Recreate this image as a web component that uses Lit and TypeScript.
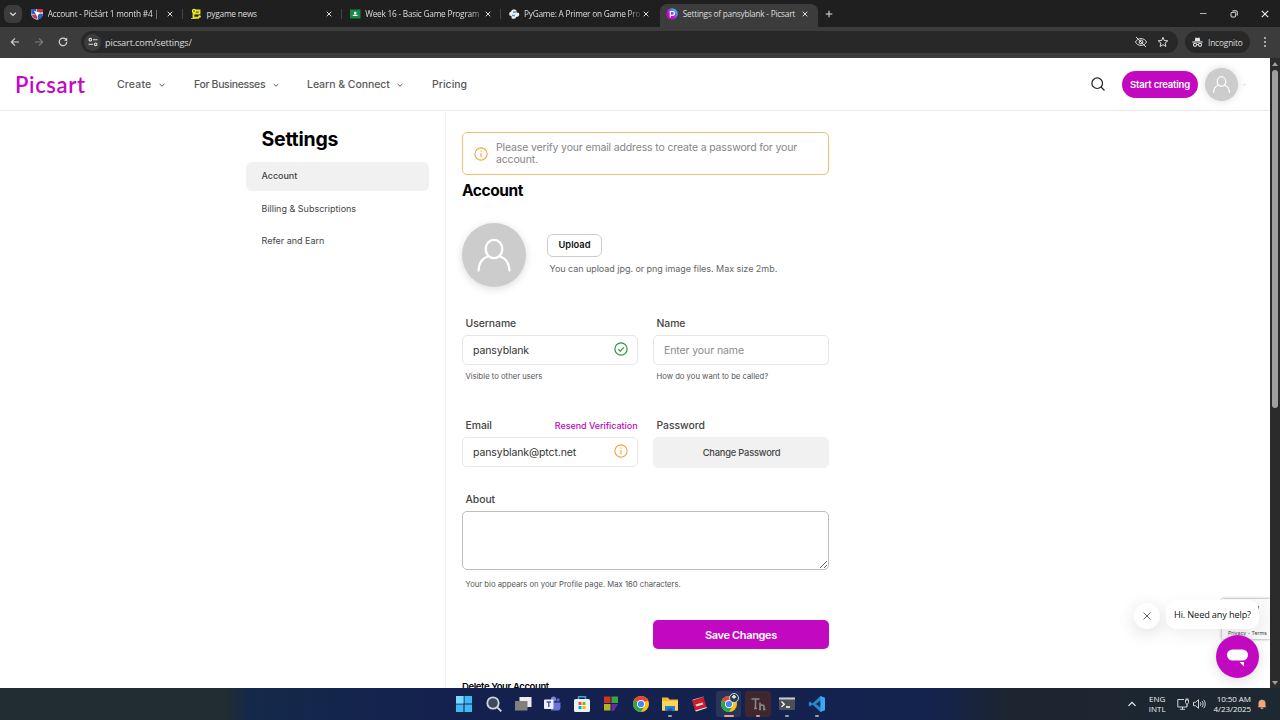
import { html, svg, css, LitElement } from 'lit';
import { customElement, property } from 'lit/decorators.js';

const icons: Record<string, unknown> = {
  shield: svg`<svg viewBox="0 0 12 12"><path d="M0 1h12v4c0 4-3 6-6 7C3 11 0 9 0 5z" fill="#b9c8de"/><path d="M0 1h5v5H.5zM7 6h5c-.6 3-3 5-5 5.600z" fill="#2b5fc0"/><path d="M6 1h6v3L6 5zM1 7l5-1v5C3 10 1.500 9 1 7z" fill="#c63545"/><path d="M3 3l6 1.500-3 4z" fill="#fff"/></svg>`,
  snake: svg`<svg viewBox="0 0 12 12"><path d="M4 2.500h5.500v3H3.500v4.200H9" fill="none" stroke="#e6e21c" stroke-width="1.900"/><circle cx="4" cy="3" r="2.200" fill="#f2ee2a"/><circle cx="9.500" cy="8.500" r="1.300" fill="#f2ee2a"/><circle cx="4" cy="3" r=".8" fill="#222"/><path d="M6.500 3h2M1 10.500h4" stroke="#d8d8b0" stroke-width=".8"/></svg>`,
  classroom: svg`<svg viewBox="0 0 12 12"><path d="M1 1.500h10.500v9H1z" fill="#188a42"/><circle cx="6.200" cy="5" r="1.300" fill="#fff"/><path d="M3.500 8c.4-2 5-2 5.400 0z" fill="#fff"/></svg>`,
  python: svg`<svg viewBox="0 0 12 12"><path d="M3.500 2.500C4 1 8 1 8.500 2.500V4.500L11 5c.5 2 0 3.500-1.500 3.800L8 9c0 2-3.500 2.500-4.500 1V8L1.500 7.500C.8 5 1.500 4 3 3.800z" fill="#e9f2fb"/><path d="M5 4h3M4 7.500h3" stroke="#5c8fc6" stroke-width="1.300"/></svg>`,
  picsart: svg`<svg viewBox="0 0 12 12"><defs><linearGradient id="pg" x1="0" y1="1" x2="1" y2="0"><stop offset=".35" stop-color="#c209c1"/><stop offset=".6" stop-color="#7a5be8"/><stop offset=".85" stop-color="#22d0f0"/></linearGradient></defs><circle cx="6" cy="6" r="5.800" fill="url(#pg)"/><path d="M4.300 9.500V3.500h2.200a1.800 1.800 0 0 1 0 3.800H4.300" fill="none" stroke="#fff" stroke-width="1.200"/></svg>`,
  close: svg`<svg viewBox="0 0 12 12"><path d="M3.700 3.700l4.600 4.600M8.300 3.700l-4.600 4.600" stroke="#dcdcdc" stroke-width="1"/></svg>`,
  plus: svg`<svg viewBox="0 0 12 12"><path d="M6 2.700v6.600M2.700 6h6.600" stroke="#e3e3e3" stroke-width="1"/></svg>`,
  chevron: svg`<svg viewBox="0 0 12 12"><path d="M3.200 4.800L6 7.500l2.800-2.700" fill="none" stroke="currentColor" stroke-width="1.200"/></svg>`,
  back: svg`<svg viewBox="0 0 12 12"><path d="M10 6H2.500M6 2.300L2.300 6 6 9.700" fill="none" stroke="#d6d6d6" stroke-width="1.100"/></svg>`,
  forward: svg`<svg viewBox="0 0 12 12"><path d="M2 6h7.500M6 2.300L9.700 6 6 9.700" fill="none" stroke="#7d7d7d" stroke-width="1.100"/></svg>`,
  reload: svg`<svg viewBox="0 0 12 12"><path d="M9.800 5.800a3.800 3.800 0 1 1-1.100-2.600L9.800 4.300" fill="none" stroke="#d6d6d6" stroke-width="1.200"/><path d="M10.200 1.500v3.200H7z" fill="#d6d6d6"/></svg>`,
  tune: svg`<svg viewBox="0 0 12 12"><g fill="none" stroke="#dcdcdc" stroke-width="1.100"><circle cx="3.300" cy="3.700" r="1.300"/><path d="M6 3.700h4.500M1.500 8.300H6"/><circle cx="8.700" cy="8.300" r="1.300"/></g></svg>`,
  eyeOff: svg`<svg viewBox="0 0 14 14"><g fill="none" stroke="#dcdcdc" stroke-width="1"><path d="M1.500 7C3.500 2.500 10.500 2.500 12.500 7 10.500 11.500 3.500 11.500 1.500 7z"/><circle cx="7" cy="7" r="1.900"/><path d="M2 2l10 10"/></g></svg>`,
  star: svg`<svg viewBox="0 0 14 14"><path d="M7 2.300l1.300 3.200 3.500.3-2.700 2.300.8 3.400L7 9.700l-2.900 1.800.8-3.400-2.700-2.300 3.500-.3z" fill="none" stroke="#dcdcdc" stroke-width="1"/></svg>`,
  incognito: svg`<svg viewBox="0 0 14 14"><path d="M4 6l.8-3.800 2.200.5 2.200-.5L10 6z" fill="#e3e3e3"/><path d="M1.500 7h11" stroke="#e3e3e3" stroke-width="1.200"/><g fill="none" stroke="#e3e3e3" stroke-width="1.100"><circle cx="4.300" cy="10" r="1.700"/><circle cx="9.700" cy="10" r="1.700"/><path d="M6 9.800h2"/></g></svg>`,
  dots: svg`<svg viewBox="0 0 12 12"><g fill="#dcdcdc"><circle cx="6" cy="2" r=".9"/><circle cx="6" cy="6" r=".9"/><circle cx="6" cy="10" r=".9"/></g></svg>`,
  minimize: svg`<svg viewBox="0 0 12 12"><path d="M3 5.500h6.500" stroke="#b6b6b6"/></svg>`,
  restore: svg`<svg viewBox="0 0 12 12"><g fill="none" stroke="#e3e3e3"><rect x="3" y="4.300" width="4.700" height="4.700" rx="1"/><path d="M4.500 2.800h3.500a1.300 1.300 0 0 1 1.300 1.300v3.400"/></g></svg>`,
  winClose: svg`<svg viewBox="0 0 12 12"><path d="M2.800 2.800l6.400 6.400M9.200 2.800L2.800 9.200" stroke="#efefef" stroke-width="1.100"/></svg>`,
  search: svg`<svg viewBox="0 0 16 16"><circle cx="7.200" cy="7.200" r="5.300" fill="none" stroke="#222" stroke-width="1.200"/><path d="M11 11l3.500 3.500" stroke="#222" stroke-width="1.200"/></svg>`,
  person: svg`<svg viewBox="0 0 64 64"><g fill="none" stroke="#fff" stroke-width="2.300" stroke-linecap="round"><ellipse cx="32" cy="26" rx="8.300" ry="9.200"/><path d="M16.500 47.500c.5-7 4-12.500 9.500-14M47.500 47.500c-.5-7-4-12.500-9.500-14"/></g></svg>`,
  info: svg`<svg viewBox="0 0 14 14"><g fill="none" stroke="#f4a53c" stroke-width="1.100"><circle cx="7" cy="7" r="6.100"/><path d="M7 6v4.300M7 3.600v1.200"/></g></svg>`,
  check: svg`<svg viewBox="0 0 14 14"><g fill="none" stroke="#2f9440" stroke-width="1.200"><circle cx="7" cy="7" r="6.100"/><path d="M4.300 7.200l2 1.900 3.600-3.800"/></g></svg>`,
  dismiss: svg`<svg viewBox="0 0 12 12"><path d="M2.500 2.500l7 7M9.500 2.500l-7 7" stroke="#666" stroke-width="1"/></svg>`,
  chat: svg`<svg viewBox="0 0 43 43"><rect x="11" y="14.500" width="21" height="11" rx="5.500" fill="#fff"/><path d="M23.500 27h4.500v4.500z" fill="#fff"/></svg>`,
  windows: svg`<svg viewBox="0 0 18 18"><path d="M1 1h7.500v7.500H1zM9.500 1H17v7.500H9.500zM1 9.500h7.500V17H1zM9.500 9.500H17V17H9.500z" fill="#3fb9f7"/><path d="M1 1h7.500v7.500H1z" fill="#7ad8ff"/></svg>`,
  find: svg`<svg viewBox="0 0 18 18"><circle cx="8" cy="8" r="5.700" fill="#3c485c" stroke="#d0d5df" stroke-width="1.800"/><path d="M12.300 12.300l4 4" stroke="#d0d5df" stroke-width="1.900"/></svg>`,
  tasks: svg`<svg viewBox="0 0 18 18"><path d="M5.500 2H17.500v10H5.500z" fill="#ededec"/><path d="M1 6h12.500v9.500H1z" fill="#80817e"/></svg>`,
  teams: svg`<svg viewBox="0 0 18 18"><circle cx="10.500" cy="4" r="2.600" fill="#7b83eb"/><circle cx="15" cy="5" r="1.800" fill="#5b62c5"/><path d="M8 7.500h9.500V12a3 3 0 0 1-3.500 3.500H8z" fill="#6b72dc"/><rect x="1" y="4.500" width="9.500" height="9.500" rx="1" fill="#eef0fb"/><path d="M3.500 7h4.500M5.800 7v5" stroke="#4a51b8" stroke-width="1.400"/></svg>`,
  store: svg`<svg viewBox="0 0 18 18"><path d="M5.500 5V1.700h7V5" fill="none" stroke="#35a7e6" stroke-width="1.400"/><rect x="1" y="4" width="16" height="13" rx="1.500" fill="#eef2f5"/><path d="M5.500 7h3v3h-3z" fill="#f25022"/><path d="M9.500 7h3v3h-3z" fill="#7fba00"/><path d="M5.500 11h3v3h-3z" fill="#00a4ef"/><path d="M9.500 11h3v3h-3z" fill="#ffb900"/></svg>`,
  blocks: svg`<svg viewBox="0 0 18 18"><path d="M2 1.500h6.500V8H2z" fill="#d03224"/><path d="M9.500 1.500H16V8H9.500z" fill="#37a53a"/><path d="M2 9h6.500v6.500H2z" fill="#b2b51c"/><path d="M9.500 9H16l-4 7H9.500z" fill="#6a29a8"/></svg>`,
  chrome: svg`<svg viewBox="0 0 18 18"><circle cx="9" cy="9" r="8" fill="#fbc116"/><path d="M9 9L2.100 5A8 8 0 0 1 15.900 5z" fill="#ea4335"/><path d="M2.100 5A8 8 0 0 0 9 17l3.500-6z" fill="#2fa34f"/><path d="M9 5h6.900" stroke="#ea4335"/><circle cx="9" cy="9" r="4" fill="#fff"/><circle cx="9" cy="9" r="3.100" fill="#4285f4"/></svg>`,
  folder: svg`<svg viewBox="0 0 18 18"><path d="M1 2.500h6l1.500 2H17v11H1z" fill="#f5b92e"/><path d="M1 6h16v9.500H1z" fill="#fcd55b"/><path d="M4 11h10v5H4z" fill="#2b7fd0"/><path d="M6.500 13.500h5V16h-5z" fill="#1b5fa8"/></svg>`,
  redCard: svg`<svg viewBox="0 0 18 18"><path d="M2 5.500L13.500 2l3 10L5 15.500z" fill="#c81e2c"/><path d="M2 5.500l1-1L14 1.600l-.5.400z" fill="#f4d8da"/><path d="M5.500 9.500l7-2 .8 2-7 2z" fill="#f1cfd2"/><path d="M5 15.500l11.500-3.500.3 1L6 16.500z" fill="#f4e5e5"/></svg>`,
  serif: svg`<svg viewBox="0 0 18 18"><g fill="none" stroke="#8b8984" stroke-width="1.600"><path d="M2.500 4h8M6.500 4v9.500M5 13.500h3"/><path d="M11 7.500v7M11 11.500c0-2 4-2 4 0v3M10 14.500h2M14 14.500h2.500"/></g></svg>`,
  terminal: svg`<svg viewBox="0 0 18 18"><rect x="1" y="2.500" width="16" height="12.500" rx="1" fill="#4c5157"/><path d="M1 2.500h16v2H1z" fill="#c8cbd0"/><path d="M3.500 6.500l2.800 2.700-2.800 2.700M8 12h4" fill="none" stroke="#fff" stroke-width="1.300"/></svg>`,
  code: svg`<svg viewBox="0 0 18 18"><path d="M12.500 1L17 3v12l-4.500 2-8-7.500L2 11.500.8 10.500V7.500L2 6.500l2.500 2z" fill="#1f8ad2"/><path d="M12.500 5.500V12.500L8 9z" fill="#14264d"/><path d="M12.500 1L17 3v12l-4.500 2z" fill="#3aa8f2"/></svg>`,
  up: svg`<svg viewBox="0 0 12 12"><path d="M2.500 7.800L6 4.300l3.500 3.500" fill="none" stroke="#f1f1f1" stroke-width="1.200"/></svg>`,
  network: svg`<svg viewBox="0 0 14 14"><g fill="none" stroke="#e3e6e9" stroke-width=".9"><path d="M8 2.500H1.800V10H11V8.500M4 12.300h5M6.500 10v2"/><path d="M9.500 3v2.500c0 2 3 2 3 0V3zM10.200 3V1.300M11.800 3V1.300M11 7v2"/></g></svg>`,
  volume: svg`<svg viewBox="0 0 14 14"><g fill="none" stroke="#e3e6e9" stroke-width=".9"><path d="M1.500 5.300h2L6.500 2.700v8.600L3.500 8.700h-2z"/><path d="M8.300 5.300c.8 1 .8 2.400 0 3.400M10 4c1.500 1.800 1.500 4.200 0 6M11.700 2.800c2 2.500 2 6 0 8.400"/></g></svg>`,
  bell: svg`<svg viewBox="0 0 12 14"><path d="M1.500 10.500C2.500 9.500 2.200 8 2.200 6a3.800 3.800 0 0 1 7.600 0c0 2-.3 3.500.7 4.500zM4.500 11.500h3c-.3 1.500-2.700 1.500-3 0z" fill="#f3a57c" stroke="#f3a57c" stroke-width=".6"/></svg>`,
};

@customElement('ui-icon')
export class UiIcon extends LitElement {
  @property() name = '';

  static styles = css`
    :host {
      display: block;
      flex: none;
      width: 12px;
      height: 12px;
    }

    svg {
      display: block;
      width: 100%;
      height: 100%;
    }
  `;

  render() {
    return html`${icons[this.name]}`;
  }
}

@customElement('browser-chrome')
export class BrowserChrome extends LitElement {
  static styles = css`
    :host {
      display: block;
      height: 58px;
      background: #3c3c3c;
      color: #dedede;
      font-family: 'Open Sans', 'Noto Sans', sans-serif;
    }

    .tabs {
      display: flex;
      align-items: center;
      height: 27px;
      background: #1f1f1f;
    }

    .tab-search {
      display: grid;
      place-items: center;
      width: 18px;
      height: 18px;
      margin: 0 2.500px 0 4px;
      border-radius: 6px;
      background: #3c3c3c;
    }

    .tab {
      position: relative;
      display: flex;
      align-items: center;
      box-sizing: border-box;
      width: 158.750px;
      height: 27px;
      padding: 0 7.250px 0 6.750px;
      font-size: 8.300px;
    }

    .tab:not(.active)::after {
      content: '';
      position: absolute;
      right: 0;
      top: 9px;
      width: 1px;
      height: 10px;
      background: #444;
    }

    .tab:nth-child(5)::after {
      display: none;
    }

    .tab.active {
      height: 23px;
      align-self: flex-end;
      padding-bottom: 4px;
      border-radius: 7px 7px 0 0;
      background: #3c3c3c;
    }

    .tab span {
      flex: 1;
      margin-left: 4.500px;
      white-space: nowrap;
      letter-spacing: -0.240px;
    }

    .tab .cut {
      mask-image: linear-gradient(90deg, #000 90%, #0003 100%);
    }

    .new {
      margin-left: 5px;
    }

    .window {
      display: flex;
      gap: 19px;
      margin: 0 9px 0 auto;
    }

    .toolbar {
      display: flex;
      align-items: center;
      height: 30px;
      padding: 0 9px;
    }

    .toolbar > ui-icon {
      margin-right: 12px;
    }

    .toolbar > ui-icon:last-child {
      margin-right: 0;
    }

    .address {
      display: flex;
      align-items: center;
      box-sizing: border-box;
      width: 1097px;
      height: 22px;
      padding: 0 8px 0 3px;
      border-radius: 11px;
      background: #282828;
      font-size: 9.200px;
      letter-spacing: -0.150px;
    }

    .site {
      display: grid;
      place-items: center;
      width: 17px;
      height: 17px;
      margin-right: 4px;
      border-radius: 50%;
      background: #3c3c3c;
    }

    .address .end {
      display: flex;
      gap: 8px;
      margin-left: auto;
    }

    .end ui-icon,
    .private ui-icon {
      width: 14px;
      height: 14px;
    }

    .private ui-icon {
      width: 13px;
    }

    .private {
      display: flex;
      flex: none;
      align-items: center;
      gap: 4px;
      box-sizing: border-box;
      width: 65px;
      height: 22px;
      margin: 0 9px 0 7px;
      padding-left: 6px;
      border-radius: 11px;
      background: #282828;
      font-size: 8.300px;
      letter-spacing: -0.150px;
    }
  `;

  static tabs = [
    { icon: 'shield', title: 'Account - Pícšárt 1 month #4 |', cut: true },
    { icon: 'snake', title: 'pygame news' },
    { icon: 'classroom', title: 'Week 16 - Basic Game Program', cut: true },
    { icon: 'python', title: 'PyGame: A Primer on Game Pro', cut: true },
    { icon: 'picsart', title: 'Settings of pansyblank - Picsart', active: true },
  ];

  render() {
    return html`
      <div class="tabs">
        <div class="tab-search"><ui-icon name="chevron"></ui-icon></div>
        ${BrowserChrome.tabs.map(
          (t) => html`
            <div class="tab ${t.active ? 'active' : ''}">
              <ui-icon name=${t.icon}></ui-icon>
              <span class=${t.cut ? 'cut' : ''}>${t.title}</span>
              <ui-icon name="close"></ui-icon>
            </div>
          `,
        )}
        <ui-icon class="new" name="plus"></ui-icon>
        <div class="window">
          <ui-icon name="minimize"></ui-icon>
          <ui-icon name="restore"></ui-icon>
          <ui-icon name="winClose"></ui-icon>
        </div>
      </div>
      <div class="toolbar">
        <ui-icon name="back"></ui-icon>
        <ui-icon name="forward"></ui-icon>
        <ui-icon name="reload"></ui-icon>
        <div class="address">
          <div class="site"><ui-icon name="tune"></ui-icon></div>
          <span>picsart.com/settings/</span>
          <div class="end">
            <ui-icon name="eyeOff"></ui-icon>
            <ui-icon name="star"></ui-icon>
          </div>
        </div>
        <div class="private"><ui-icon name="incognito"></ui-icon>Incognito</div>
        <ui-icon name="dots"></ui-icon>
      </div>
    `;
  }
}

@customElement('site-header')
export class SiteHeader extends LitElement {
  static styles = css`
    :host {
      display: flex;
      align-items: center;
      box-sizing: border-box;
      height: 53px;
      padding: 0 23px 0 15px;
      border-bottom: 1px solid #ebebeb;
      color: #5a5a5a;
      font-size: 10.500px;
      font-weight: 500;
    }

    .logo {
      width: 71px;
      margin-right: 31px;
      color: #c209c1;
      font: 600 22px 'Lato', sans-serif;
      letter-spacing: 0.650px;
    }

    nav {
      display: flex;
      flex: 1;
    }

    nav span {
      display: flex;
      align-items: center;
      gap: 5.500px;
    }

    nav ui-icon {
      width: 10px;
      height: 10px;
      margin-top: 2px;
    }

    .create {
      width: 77px;
      letter-spacing: 0.150px;
    }

    .business {
      width: 113px;
      letter-spacing: -0.350px;
    }

    .learn {
      width: 125px;
      letter-spacing: -0.050px;
    }

    .search {
      width: 16px;
      height: 16px;
      margin-right: 16px;
    }

    .start {
      width: 76px;
      height: 27px;
      border-radius: 14px;
      background: #c209c1;
      color: #fff;
      font-size: 9.500px;
      font-weight: 600;
      line-height: 27px;
      text-align: center;
      letter-spacing: -0.200px;
    }

    .avatar {
      width: 33px;
      height: 33px;
      margin: 0 4px 0 7px;
      border-radius: 50%;
      background: #ccc;
      box-shadow: 0 0 8px #ddd;
    }

    .caret {
      width: 5px;
      height: 5px;
      color: #999;
    }
  `;

  render() {
    return html`
      <div class="logo">Picsart</div>
      <nav>
        <span class="create">Create <ui-icon name="chevron"></ui-icon></span>
        <span class="business">For Businesses <ui-icon name="chevron"></ui-icon></span>
        <span class="learn">Learn &amp; Connect <ui-icon name="chevron"></ui-icon></span>
        <span>Pricing</span>
      </nav>
      <ui-icon class="search" name="search"></ui-icon>
      <div class="start">Start creating</div>
      <ui-icon class="avatar" name="person"></ui-icon>
      <ui-icon class="caret" name="chevron"></ui-icon>
    `;
  }
}

@customElement('settings-page')
export class SettingsPage extends LitElement {
  static styles = css`
    :host {
      display: flex;
      height: 577px;
      padding-left: 246px;
      box-sizing: border-box;
      overflow: hidden;
      color: #444;
    }

    aside {
      box-sizing: border-box;
      width: 200px;
      padding: 17px 16px 0 0;
      border-right: 1px solid #f3f3f3;
    }

    h1 {
      height: 23px;
      margin: 0 0 11px 15.500px;
      color: #000;
      font-size: 19.500px;
      font-weight: 700;
      line-height: 22px;
      letter-spacing: -0.250px;
    }

    .item {
      height: 29px;
      margin-bottom: 3.500px;
      padding-left: 15.500px;
      border-radius: 6px;
      font-size: 9px;
      line-height: 28px;
    }

    .item.on {
      background: #f1f1f1;
      font-weight: 500;
      letter-spacing: -0.050px;
    }

    main {
      width: 367px;
      padding: 21px 0 0 16px;
    }

    .alert {
      display: flex;
      align-items: center;
      gap: 8px;
      box-sizing: border-box;
      height: 43px;
      padding: 1px 0 0 11px;
      border: 1px solid #f5bd71;
      border-radius: 5px;
      color: #858585;
      font-size: 10.500px;
      line-height: 12.500px;
      letter-spacing: -0.150px;
    }

    .alert ui-icon,
    .box ui-icon {
      width: 14px;
      height: 14px;
    }

    h2 {
      height: 20px;
      margin: 6px 0 22px;
      color: #000;
      font-size: 15.500px;
      font-weight: 700;
      line-height: 20px;
      letter-spacing: -0.420px;
    }

    .photo {
      display: flex;
      gap: 21px;
    }

    .photo ui-icon {
      width: 64px;
      height: 64px;
      border-radius: 50%;
      background: #ccc;
      box-shadow: 0 2px 8px #ddd;
    }

    .upload {
      box-sizing: border-box;
      width: 55px;
      height: 23px;
      margin: 11px 0 5px;
      border: 1px solid #ccc;
      border-radius: 6px;
      color: #111;
      font-size: 9.300px;
      font-weight: 600;
      line-height: 20px;
      text-align: center;
    }

    .rule {
      margin-left: 2.500px;
      color: #666;
      font-size: 9px;
      line-height: 14px;
      letter-spacing: -0.040px;
    }

    .grid {
      display: grid;
      grid-template-columns: 175.500px 176px;
      column-gap: 15.500px;
      margin-top: 29px;
      row-gap: 34px;
    }

    .label {
      display: flex;
      justify-content: space-between;
      align-items: center;
      height: 15px;
      margin-bottom: 4px;
      padding-left: 3.500px;
      font-size: 10.400px;
      font-weight: 500;
      letter-spacing: -0.050px;
      line-height: 15px;
    }

    .link {
      color: #b90ab8;
      font-size: 9px;
      font-weight: 500;
      letter-spacing: -0.060px;
    }

    .box {
      display: flex;
      align-items: center;
      justify-content: space-between;
      box-sizing: border-box;
      height: 29.500px;
      padding: 1px 9px 0 10px;
      border: 1px solid #e6e6e6;
      border-radius: 5px;
      color: #333;
      font-size: 10.500px;
      letter-spacing: -0.100px;
    }

    .box ui-icon {
      margin-top: -2px;
    }

    .box.empty {
      color: #8c8c8c;
    }

    .box.button {
      justify-content: center;
      height: 30.500px;
      border-color: #f1f1f1;
      background: #f1f1f1;
      color: #444;
      font-size: 9.300px;
      font-weight: 500;
      letter-spacing: -0.190px;
    }

    .hint {
      height: 14px;
      margin-top: 5.500px;
      padding-left: 3.500px;
      color: #555;
      font-size: 7.700px;
      line-height: 14px;
    }

    .about {
      margin-top: 24.500px;
    }

    textarea {
      display: block;
      box-sizing: border-box;
      width: 367px;
      height: 59px;
      border: 1px solid #bdbdbd;
      border-radius: 5px;
      background: #fff;
    }

    .about .hint {
      margin-top: 8px;
    }

    .save {
      width: 176px;
      height: 29px;
      margin: 28px 0 31px auto;
      border-radius: 5px;
      background: #c209c1;
      color: #fff;
      font-size: 11px;
      font-weight: 600;
      line-height: 30px;
      text-align: center;
      letter-spacing: -0.350px;
    }

    .delete {
      color: #000;
      font-size: 9.500px;
      font-weight: 600;
      line-height: 14px;
      letter-spacing: -0.380px;
    }
  `;

  render() {
    return html`
      <aside>
        <h1>Settings</h1>
        <div class="item on">Account</div>
        <div class="item">Billing &amp; Subscriptions</div>
        <div class="item">Refer and Earn</div>
      </aside>
      <main>
        <div class="alert">
          <ui-icon name="info"></ui-icon>
          <span>Please verify your email address to create a password for your<br />account.</span>
        </div>
        <h2>Account</h2>
        <div class="photo">
          <ui-icon name="person"></ui-icon>
          <div>
            <div class="upload">Upload</div>
            <div class="rule">You can upload jpg. or png image files. Max size 2mb.</div>
          </div>
        </div>
        <div class="grid">
          <div>
            <div class="label">Username</div>
            <div class="box">pansyblank <ui-icon name="check"></ui-icon></div>
            <div class="hint">Visible to other users</div>
          </div>
          <div>
            <div class="label">Name</div>
            <div class="box empty">Enter your name</div>
            <div class="hint">How do you want to be called?</div>
          </div>
          <div>
            <div class="label">Email <span class="link">Resend Verification</span></div>
            <div class="box">pansyblank@ptct.net <ui-icon name="info"></ui-icon></div>
          </div>
          <div>
            <div class="label">Password</div>
            <div class="box button">Change Password</div>
          </div>
        </div>
        <div class="about">
          <div class="label">About</div>
          <textarea></textarea>
          <div class="hint">Your bio appears on your Profile page. Max 160 characters.</div>
        </div>
        <div class="save">Save Changes</div>
        <div class="delete">Delete Your Account</div>
      </main>
    `;
  }
}

@customElement('task-bar')
export class TaskBar extends LitElement {
  static styles = css`
    :host {
      display: flex;
      align-items: center;
      box-sizing: border-box;
      height: 32px;
      padding: 0 12px 0 449.500px;
      background: linear-gradient(90deg, #212c33 0 228px, #14294a 248px, #14214f 440px, #14224e 930px, #1d2530 1010px, #1c2832);
      color: #f1f1f1;
      font: 8px/10.500px 'Open Sans', sans-serif;
      text-align: right;
    }

    .app {
      position: relative;
      display: grid;
      flex: none;
      place-items: center;
      width: 29.400px;
      height: 32px;
    }

    .app.focus::before,
    .app.alert::before {
      content: '';
      position: absolute;
      inset: 3px 2px;
      border-radius: 3px;
      background: #27345c;
    }

    .app.alert::before {
      background: #40262f;
    }

    .app ui-icon {
      position: relative;
      width: 18px;
      height: 18px;
    }

    .running::after {
      content: '';
      position: absolute;
      bottom: 3px;
      width: 4px;
      height: 2px;
      border-radius: 1px;
      background: #9aa0ae;
    }

    .focus.running::after {
      width: 10px;
      background: #eaa48c;
    }

    .alert.running::after {
      background: #ef8c8c;
    }

    .badge {
      position: absolute;
      top: 5px;
      right: 4px;
      box-sizing: border-box;
      width: 10px;
      height: 10px;
      border: 1px solid #c7d3d8;
      border-radius: 50%;
      background: radial-gradient(circle at 50% 35%, #dde 1.500px, #25414b 2px);
    }

    .tray {
      display: flex;
      align-items: center;
      margin-left: auto;
    }

    .lang {
      margin: 0 10px 0 11px;
      text-align: center;
    }

    .tray .device {
      width: 14px;
      height: 14px;
      margin-right: 2px;
    }

    .time {
      margin: 0 5px 0 6px;
      letter-spacing: -0.050px;
    }
  `;

  static apps = [
    ['windows', ''],
    ['find', ''],
    ['tasks', ''],
    ['teams', ''],
    ['store', ''],
    ['blocks', ''],
    ['chrome', ''],
    ['folder', 'running'],
    ['redCard', ''],
    ['chrome', 'focus running'],
    ['serif', 'alert running'],
    ['terminal', 'running'],
    ['code', 'running'],
  ];

  render() {
    return html`
      ${TaskBar.apps.map(
        ([icon, state]) => html`
          <div class="app ${state}">
            <ui-icon name=${icon}></ui-icon>
            ${state.startsWith('focus') ? html`<div class="badge"></div>` : ''}
          </div>
        `,
      )}
      <div class="tray">
        <ui-icon name="up"></ui-icon>
        <div class="lang">ENG<br />INTL</div>
        <ui-icon class="device" name="network"></ui-icon>
        <ui-icon class="device" name="volume"></ui-icon>
        <div class="time">10:50 AM<br />4/23/2025</div>
        <ui-icon name="bell"></ui-icon>
      </div>
    `;
  }
}

@customElement('app-root')
export class AppRoot extends LitElement {
  static styles = css`
    :host {
      display: block;
      position: relative;
      width: 1280px;
      height: 720px;
      overflow: hidden;
      background: #fff;
      font-family: 'Inter', sans-serif;
    }

    .view {
      display: flex;
      height: 630px;
    }

    .page {
      width: 1270px;
    }

    .scroll {
      display: flex;
      flex-direction: column;
      align-items: center;
      width: 10px;
      background: #2b2b2b;
    }

    .scroll::before,
    .scroll::after {
      content: '';
      margin: 4px 0 4px;
      border: 3px solid transparent;
      border-top: 0;
      border-bottom: 4px solid #9f9f9f;
    }

    .scroll::after {
      margin: auto 0 3px;
      border-top: 4px solid #9f9f9f;
      border-bottom: 0;
    }

    .thumb {
      width: 6px;
      height: 338px;
      border-radius: 3px;
      background: #9f9f9f;
    }

    .captcha {
      position: absolute;
      left: 1222px;
      top: 599px;
      box-sizing: border-box;
      width: 48px;
      height: 40px;
      padding: 30px 0 0 6px;
      background: #fafafa;
      box-shadow: 0 0 3px #888;
      clip-path: inset(-4px 0 -4px -4px);
      color: #444;
      font-size: 5.200px;
      line-height: 8px;
      white-space: nowrap;
    }

    .captcha::before {
      content: '';
      position: absolute;
      left: 36px;
      top: 7px;
      width: 1px;
      height: 4px;
      background: #334;
    }

    .dismiss {
      position: absolute;
      left: 1134px;
      top: 603px;
      display: grid;
      place-items: center;
      width: 26px;
      height: 26px;
      border-radius: 50%;
      background: #fff;
      box-shadow: 0 4px 18px #0002;
    }

    .help {
      position: absolute;
      left: 1166px;
      top: 600px;
      width: 93px;
      height: 29px;
      border-radius: 10px;
      background: #fff;
      box-shadow: 0 6px 18px #0001;
      color: #111;
      font: 9.200px/29px 'Open Sans', sans-serif;
      letter-spacing: -0.150px;
      text-align: center;
      white-space: nowrap;
    }

    .chat {
      position: absolute;
      left: 1216px;
      top: 634.500px;
      width: 43px;
      height: 43px;
      border-radius: 50%;
      background: #c209c1;
      box-shadow: 0 3px 14px #0002;
    }
  `;

  render() {
    return html`
      <browser-chrome></browser-chrome>
      <div class="view">
        <div class="page">
          <site-header></site-header>
          <settings-page></settings-page>
        </div>
        <div class="scroll"><div class="thumb"></div></div>
      </div>
      <task-bar></task-bar>
      <div class="captcha">Privacy - Terms</div>
      <div class="dismiss"><ui-icon name="dismiss"></ui-icon></div>
      <div class="help">Hi. Need any help?</div>
      <ui-icon class="chat" name="chat"></ui-icon>
    `;
  }
}
